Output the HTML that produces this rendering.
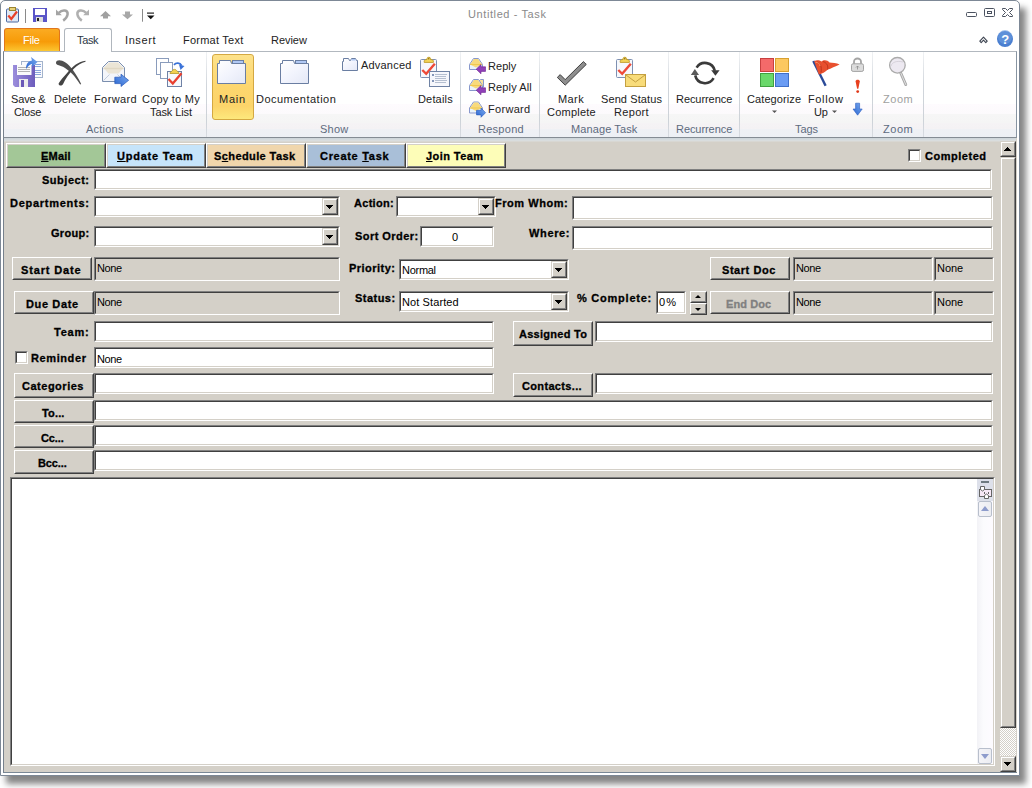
<!DOCTYPE html>
<html><head><meta charset="utf-8">
<style>
*{box-sizing:border-box;margin:0;padding:0}
html,body{width:1032px;height:788px;overflow:hidden;background:#fff;font-family:"Liberation Sans",sans-serif}
.a{position:absolute}
.tx{white-space:pre;line-height:12px}
.in{position:absolute;background:#fff;border-style:solid;border-width:1px;border-color:#808080 #fff #fff #808080}
.in::before{content:"";position:absolute;left:0;top:0;right:0;bottom:0;border-style:solid;border-width:1px;border-color:#404040 #d4d0c8 #d4d0c8 #404040}
.gr{background:#d4d0c8}
.bt{position:absolute;background:#d4d0c8;border-style:solid;border-width:1px;border-color:#fff #404040 #404040 #fff}
.bt::before{content:"";position:absolute;left:0;top:0;right:0;bottom:0;border-style:solid;border-width:1px;border-color:#d4d0c8 #808080 #808080 #d4d0c8}
.dd{position:absolute;top:1px;right:1px;width:16px;bottom:1px;background:#d4d0c8;border-style:solid;border-width:1px;border-color:#d4d0c8 #404040 #404040 #d4d0c8}
.dd::before{content:"";position:absolute;left:0;top:0;right:0;bottom:0;border-style:solid;border-width:1px;border-color:#fff #808080 #808080 #fff}
.sb{position:absolute;background:#d4d0c8;border-style:solid;border-width:1px;border-color:#d4d0c8 #404040 #404040 #d4d0c8}
.sb::before{content:"";position:absolute;left:0;top:0;right:0;bottom:0;border-style:solid;border-width:1px;border-color:#fff #808080 #808080 #fff}
.arr{position:absolute;width:0;height:0;border-left:3.5px solid transparent;border-right:3.5px solid transparent;border-top:4px solid #000}
.sep{position:absolute;top:52px;width:1px;height:85px;background:linear-gradient(#f0f2f4,#d0d5db 40%,#cdd2d8 80%,#d8dce2)}
</style></head>
<body>
<!-- window frame + shadow -->
<div class="a" style="left:6px;top:8px;width:1020px;height:776px;background:rgba(0,0,0,0.48);filter:blur(3px)"></div>
<div class="a" style="left:0;top:0;width:1020px;height:776px;border:1px solid #7d8896;border-radius:5px 5px 0 0;background:#fff"></div>
<!-- form area -->
<div class="a" style="left:3px;top:137px;width:1014px;height:636px;background:#d4d0c8;border-left:1px solid #76808c;border-bottom:1px solid #7a8896"></div>

<!-- QAT icons -->
<svg class="a" style="left:5px;top:7px" width="150" height="18" viewBox="0 0 150 18">
  <!-- task clipboard icon -->
  <rect x="1.5" y="2" width="12" height="13" rx="1" fill="#dfe8f5" stroke="#4a68a0"/>
  <rect x="4.5" y="0.5" width="6" height="3" fill="#e8d27a" stroke="#9a8430"/>
  <path d="M3.3 8.5 L6.3 12 L12 4.5" stroke="#e8402a" stroke-width="2.2" fill="none"/>
  <rect x="20" y="2" width="1" height="14" fill="#8a8a8a"/>
  <!-- save -->
  <rect x="28" y="1" width="14" height="14" fill="#5a55c8"/>
  <rect x="30" y="2" width="10" height="6" fill="#fff"/>
  <rect x="31" y="10" width="7" height="5" fill="#dcdcdc"/><rect x="32" y="11" width="2" height="3" fill="#222"/>
  <!-- undo -->
  <path d="M53.8 5.8 C57.5 2.2,63.2 3,62.6 7.4 C62.2 10,60.5 12,58.2 13.6" stroke="#a4a4a4" stroke-width="2.5" fill="none"/>
  <path d="M51 2.5 L51 8.2 L56.8 8.2 Z" fill="#a4a4a4"/>
  <!-- redo -->
  <path d="M81.2 5.8 C77.5 2.2,71.8 3,72.4 7.4 C72.8 10,74.5 12,76.8 13.6" stroke="#b0b0b0" stroke-width="2.5" fill="none"/>
  <path d="M84 2.5 L84 8.2 L78.2 8.2 Z" fill="#b0b0b0"/>
  <!-- up/down arrows -->
  <path d="M95 9.2 L100.5 4 L106 9.2 L103 9.2 L103 11.6 L98 11.6 L98 9.2 Z" fill="#a0a0a0"/>
  <path d="M117 7.4 L122.5 12.2 L128 7.4 L125 7.4 L125 4.6 L120 4.6 L120 7.4 Z" fill="#a8a8a8"/>
  <rect x="137" y="2" width="1" height="12.7" fill="#8a8a8a"/>
  <rect x="142" y="5.5" width="7" height="1.2" fill="#222"/>
  <path d="M142 8.6 L149.5 8.6 L145.75 12.2 Z" fill="#111"/>
</svg>
<!-- window controls -->
<svg class="a" style="left:960px;top:4px" width="58" height="48" viewBox="0 0 58 48">
  <rect x="6.5" y="8.5" width="10" height="4" rx="1" fill="#fff" stroke="#4b5260"/>
  <rect x="24.5" y="4.5" width="10" height="8" rx="1" fill="#fff" stroke="#4b5260"/>
  <rect x="27.5" y="7.5" width="4" height="2" fill="#fff" stroke="#4b5260"/>
  <path d="M42.5 4.5 L45.5 4.5 L47.5 6.5 L49.5 4.5 L52.5 4.5 L52.5 5.5 L49.5 8.5 L52.5 11.5 L52.5 12.5 L49.5 12.5 L47.5 10.5 L45.5 12.5 L42.5 12.5 L42.5 11.5 L45.5 8.5 L42.5 5.5 Z" fill="#fff" stroke="#4b5260"/>
  <path d="M19.8 37.2 L23.5 33.2 L27.2 37.2 L25.8 38.6 L23.5 36.2 L21.2 38.6 Z" fill="#fff" stroke="#3c4350" stroke-width="1.1" stroke-linejoin="round"/>
  <circle cx="45" cy="35" r="8" fill="#4a7fd0"/>
  <circle cx="45" cy="33" r="7" fill="#6a9be0" opacity="0.6"/>
  <text x="45.3" y="40" font-family="Liberation Sans" font-weight="bold" font-size="13" fill="#fff" text-anchor="middle">?</text>
</svg>

<!-- tabs -->
<div class="a" style="left:4px;top:28px;width:56px;height:24px;border:1px solid #e0761c;border-bottom:none;border-radius:3px 3px 0 0;background:linear-gradient(#fbab22,#f79b08 55%,#fbbf2a 90%,#fcd23a)"></div>
<div class="a" style="left:64px;top:28px;width:48px;height:24px;border:1px solid #b0b6bd;border-bottom:none;border-radius:3px 3px 0 0;background:#fff"></div>

<!-- ribbon -->
<div class="a" style="left:3px;top:51px;width:1014px;height:87px;border:1px solid;border-color:#b2b8bf #8794a2 #848c94 #76808c;background:linear-gradient(#fff 0px,#fff 52px,#fefbfe 52px,#fcfafc 62px,#f6f6f6 62px,#f5f5f5 71px,#f5f3f5 71px,#f4f2f4 77px,#eff1f5 77px,#edf0f5 85px)"></div>
<div class="a" style="left:65px;top:51px;width:46px;height:1px;background:#fff"></div>
<div class="a" style="left:4px;top:138px;width:1012px;height:4px;background:linear-gradient(#ccd4d9 0px,#d6dcdf 2px,#dcdedd 3px,#d4d0c8 4px)"></div>

<div class="sep" style="left:206px"></div>
<div class="sep" style="left:460px"></div>
<div class="sep" style="left:539px"></div>
<div class="sep" style="left:668px"></div>
<div class="sep" style="left:739px"></div>
<div class="sep" style="left:872px"></div>
<div class="sep" style="left:923px"></div>

<!-- Main selected button -->
<div class="a" style="left:212px;top:54px;width:42px;height:66px;border:1px solid #d4a842;border-radius:3px;background:linear-gradient(#fde28a,#fdd66e 50%,#fcd46a 80%,#fde87c)"></div>

<!-- ribbon icons -->
<svg class="a" style="left:0;top:52px" width="1000" height="70" viewBox="0 52 1000 70">
  <!-- save & close -->
  <defs>
   <linearGradient id="flop" x1="0" x2="1"><stop offset="0" stop-color="#9c8edc"/><stop offset="1" stop-color="#6c5cbc"/></linearGradient>
   <linearGradient id="blu" x1="0" x2="1" y1="1" y2="0"><stop offset="0" stop-color="#2a66d0"/><stop offset="1" stop-color="#7aaaf0"/></linearGradient>
  </defs>
  <rect x="21.5" y="61.5" width="21" height="16" fill="#f9fafd" stroke="#a4b4cc"/>
  <path d="M35 64.5 H41 M35 66.5 H41 M35 70.5 H41 M35 72.5 H41 M35 74.5 H41" stroke="#8aa6dc"/>
  <path d="M13 65 H35 V87 H15 L13 85 Z" fill="url(#flop)"/>
  <rect x="17" y="65" width="14.5" height="10" fill="#fbfbfb"/>
  <path d="M18 67.5 H30 M18 69.5 H30 M18 71.5 H30" stroke="#b4b4b4"/>
  <rect x="19" y="79" width="9" height="8" fill="#ececec"/><rect x="21" y="80" width="3" height="7" fill="#6a58b8"/>
  <path d="M26 69 C26 63,29 61,32 60.5 L31 57 L37.5 62 L32 67 L32 64 C30 64.5,28 66,26 69 Z" fill="url(#blu)"/>
  <!-- delete X -->
  <path d="M56 62.5 C56.5 59.5,61 59.5,65.5 62.5 C70 65.5,76 73,81.2 84 L80.2 84.6 C75 76,69.5 70.5,63 66.8 C59 65,55.6 65,56 62.5 Z" fill="#505050"/>
  <path d="M85.5 60.8 C78.5 61.5,72.5 66.5,67.5 72.5 C63.5 77,60.2 80.5,58.6 83.5 C58.6 86,61.8 86.2,63 84.2 C65 79.5,69 73.5,73.8 68.8 C77.5 65.2,81.5 62.8,85.5 61.8 Z" fill="#444"/>
  <!-- forward envelope -->
  <path d="M102.5 67.5 L108.5 61.5 H118.5 L124.5 67.5 V81.5 H102.5 Z" fill="#f3f5fa" stroke="#7a8eae"/>
  <path d="M103.5 68 L109 62.5 H118 L123.5 68 L118.5 73.5 H108.5 Z" fill="#ebe5d6"/>
  <path d="M103.5 68.5 H123.5" stroke="#e0d8c4" stroke-width="1.5"/>
  <path d="M103.5 80.5 L109.5 74.5 M123.5 80.5 L117.5 74.5" stroke="#b4c0d4" stroke-width="0.8"/>
  <path d="M114.8 77.2 H121 V74.2 L128.6 80.3 L121 86.5 V83.6 H114.8 Z" fill="url(#blu)" stroke="#2456b8" stroke-width="0.7"/>
  <!-- copy to my task list -->
  <rect x="156.5" y="58.5" width="12" height="16" fill="#fff" stroke="#8a9cbc"/>
  <rect x="160.5" y="62.5" width="12" height="16" fill="#fff" stroke="#8a9cbc"/>
  <rect x="167.5" y="71.5" width="14" height="15" fill="#f6f8fc" stroke="#6f82a6"/>
  <path d="M170 73.5 C170 71.5,172 71.5,172.5 70.5 C173 69,176 69,176.5 70.5 C177 71.5,179 71.5,179 73.5 Z" fill="#f0d050" stroke="#b89828" stroke-width="0.8"/>
  <path d="M168.5 79 L172.8 83.6 L181.5 73.2" stroke="#e84030" stroke-width="2.3" fill="none"/>
  <path d="M174 64.8 C176 62.5,180 62.5,181.5 65.5" stroke="#3a72d8" stroke-width="1.8" fill="none"/>
  <path d="M179 64.5 L184.5 66 L180.5 70 Z" fill="#3a72d8"/>
  <!-- main folder -->
  <defs><linearGradient id="fold" x1="0" y1="0" x2="1" y2="1"><stop offset="0" stop-color="#ffffff"/><stop offset="0.5" stop-color="#f2f4fd"/><stop offset="1" stop-color="#e4e8f6"/></linearGradient></defs>
  <g transform="translate(-63,0)">
  <path d="M280.5 63.5 H282.5 V60.5 H293.5 L294.5 63.5 H308.5 V83.5 H280.5 Z" fill="url(#fold)" stroke="#6a7ea2"/>
  <rect x="295.5" y="60.5" width="11" height="3" fill="#b0c8f4" stroke="#6a7ea2"/>
  </g>
  <!-- documentation folder -->
  <g transform="translate(0,0)">
  <path d="M280.5 63.5 H282.5 V60.5 H293.5 L294.5 63.5 H308.5 V83.5 H280.5 Z" fill="url(#fold)" stroke="#6a7ea2"/>
  <rect x="295.5" y="60.5" width="11" height="3" fill="#b0c8f4" stroke="#6a7ea2"/>
  </g>
  <!-- advanced small folder -->
  <path d="M342.5 61.5 H343.5 V58.5 H348.5 L349.5 60.5 H350.5 L351.5 58.5 H355.5 L356.5 60.5 H357.5 V70.5 H342.5 Z" fill="url(#fold)" stroke="#6a7ea2"/>
  <rect x="351.5" y="59" width="4" height="1.5" fill="#b0c8f4"/>
  <!-- details -->
  <g transform="translate(0,0)">
  <rect x="420.5" y="59.5" width="16" height="18" rx="1" fill="#f6f8fc" stroke="#7d90b2"/>
  <path d="M424.2 62.4 V61.2 C424.2 60.2,425.2 59.6,426.6 59.6 H427 V58.6 C427 56.8,430.6 56.8,430.6 58.6 V59.6 H431 C432.4 59.6,433.4 60.2,433.4 61.2 V62.4 Z" fill="#f4d65a" stroke="#b8921c" stroke-width="0.8"/><circle cx="428.8" cy="58.8" r="0.7" fill="#7a5a10"/>
  <path d="M422.3 70 L426.2 73.8 L434.8 63.8" stroke="#ee4a38" stroke-width="2.4" fill="none"/>
  </g>
  <rect x="429.5" y="71.5" width="20" height="15" fill="#f6f7fc" stroke="#6f82a4"/>
  <path d="M435 74.5 H447 M435 76.5 H446 M435 78.5 H446 M435 80.5 H447 M435 82.5 H446" stroke="#a4b0c4" stroke-width="0.8"/>
  <rect x="432" y="74" width="2" height="2" fill="#8496b8"/><rect x="432" y="80" width="2" height="2" fill="#8496b8"/>
  <!-- reply icons -->
  <g transform="translate(0,0)">
  <path d="M469.5 64.5 L473.5 58.5 H478.5 L482.5 64.5 V69.5 H469.5 Z" fill="#eaf4fc" stroke="#8898cc"/>
  <path d="M470 64.5 L474 59 H478 L482 64.5 L476 67.5 Z" fill="#f8da7c"/>
  <path d="M470 64.5 H482" stroke="#f0c850" stroke-width="1"/>
  </g><path d="M485.5 66.8 H481 V64.5 L476.2 69.2 L481 73.8 V71.4 H485.5 Z" fill="#9040b8" stroke="#6a2090" stroke-width="0.6"/>
  <g transform="translate(0,21)"><path d="M476.5 62.5 L480.5 58.5 H483.5 V66 H477 Z" fill="#f8e09a" stroke="#8898cc"/>
  <path d="M469.5 64.5 L473.5 58.5 H478.5 L482.5 64.5 V69.5 H469.5 Z" fill="#eaf4fc" stroke="#8898cc"/>
  <path d="M470 64.5 L474 59 H478 L482 64.5 L476 67.5 Z" fill="#f8da7c"/>
  <path d="M470 64.5 H482" stroke="#f0c850" stroke-width="1"/>
  </g><path d="M485.5 87.8 H481 V85.5 L476.2 90.2 L481 94.8 V92.4 H485.5 Z" fill="#9040b8" stroke="#6a2090" stroke-width="0.6"/>
  <g transform="translate(0,43.5)">
  <path d="M469.5 64.5 L473.5 58.5 H478.5 L482.5 64.5 V69.5 H469.5 Z" fill="#eaf4fc" stroke="#8898cc"/>
  <path d="M470 64.5 L474 59 H478 L482 64.5 L476 67.5 Z" fill="#f8da7c"/>
  <path d="M470 64.5 H482" stroke="#f0c850" stroke-width="1"/>
  </g><path d="M476.5 110.3 H481 V108.0 L485.6 112.7 L481 117.3 V114.9 H476.5 Z" fill="url(#blu)" stroke="#2456b8" stroke-width="0.6"/>
  <!-- mark complete -->
  <path d="M557.3 77.4 L560.2 74.6 L565.2 79.6 L583.4 61.6 L586.3 64.4 L565.2 85.2 Z" fill="#8e8e8e" stroke="#353535" stroke-width="0.9" stroke-linejoin="miter"/>
  <!-- send status report -->
  <g transform="translate(196,0)">
  <rect x="420.5" y="59.5" width="16" height="18" rx="1" fill="#f6f8fc" stroke="#7d90b2"/>
  <path d="M424.2 62.4 V61.2 C424.2 60.2,425.2 59.6,426.6 59.6 H427 V58.6 C427 56.8,430.6 56.8,430.6 58.6 V59.6 H431 C432.4 59.6,433.4 60.2,433.4 61.2 V62.4 Z" fill="#f4d65a" stroke="#b8921c" stroke-width="0.8"/><circle cx="428.8" cy="58.8" r="0.7" fill="#7a5a10"/>
  <path d="M422.3 70 L426.2 73.8 L434.8 63.8" stroke="#ee4a38" stroke-width="2.4" fill="none"/>
  </g>
  <rect x="625.5" y="74.5" width="20" height="12" fill="#f8dc7a" stroke="#c4a040"/>
  <path d="M626 75 L635.5 82 L645 75" fill="none" stroke="#c4a040"/>
  <!-- recurrence -->
  <path d="M696.6 67.6 A10 10 0 0 1 714.8 70.8" stroke="#3a3a3a" stroke-width="2.6" fill="none"/>
  <path d="M711.2 70.2 L719.6 70.2 L715.4 75.8 Z" fill="#3a3a3a"/>
  <path d="M713.6 78.2 A10 10 0 0 1 695.2 75.4" stroke="#3a3a3a" stroke-width="2.6" fill="none"/>
  <path d="M690.8 75 L699 75 L694.9 69 Z" fill="#5a5a5a"/>
  <!-- categorize -->
  <rect x="760.5" y="58.5" width="13" height="13" fill="#f46a6a" stroke="#c84040"/>
  <rect x="775.5" y="58.5" width="13" height="13" fill="#fcc860" stroke="#d8a030"/>
  <rect x="760.5" y="73.5" width="13" height="13" fill="#6ad86a" stroke="#40a040"/>
  <rect x="775.5" y="73.5" width="13" height="13" fill="#6a9cf4" stroke="#4070c8"/>
  <!-- follow up flag -->
  <path d="M813.3 61 L825.6 85.8" stroke="#2a4a98" stroke-width="2.4"/>
  <path d="M814.2 61.2 C816.5 59.8,819.5 60.2,821.5 61.6 C823.5 59.6,827.5 59.8,829.5 62.6 C832.5 62.6,836.5 63.4,839.6 64.4 C835.5 66.2,831 68.2,827.5 69.8 C825.5 72,822 73.8,818.8 74.4 Z" fill="#e8502e"/>
  <path d="M817 62 C820.5 63,822 67,821 72.5 M823 61.5 C827 63,828.5 66,827.5 69.5" stroke="#b8321a" stroke-width="0.9" fill="none"/>
  <path d="M815.5 62.5 C818 62,820 63.5,820 66" stroke="#ff9a70" stroke-width="0.8" fill="none"/>
  <!-- lock -->
  <path d="M854 64 V61.8 A3.5 3.3 0 0 1 861 61.8 V64" stroke="#a4a4a4" stroke-width="1.8" fill="none"/>
  <rect x="851.5" y="63.8" width="12" height="7.6" rx="1.6" fill="#dcdcdc" stroke="#a4a4a4"/>
  <path d="M857.5 66 V69.5 M856 67.5 L857.5 66 L859 67.5" stroke="#8a8a8a" stroke-width="0.8" fill="none"/>
  <!-- exclamation -->
  <path d="M855.6 81.4 C855.4 79.2,859.8 79.2,859.8 81.4 L858.3 88.8 H857.1 Z" fill="#e8401e"/>
  <circle cx="857.7" cy="91.6" r="1.4" fill="#e03818"/>
  <!-- low importance arrow -->
  <path d="M855.6 103.2 H859.6 V109 H862.2 L857.6 115.2 L853 109 H855.6 Z" fill="url(#blu)" stroke="#2a5cc0" stroke-width="0.6"/>
  <!-- zoom -->
  <path d="M900.6 72.6 L905.8 84.6" stroke="#a8a8a8" stroke-width="2.8" stroke-linecap="round"/>
  <path d="M900.6 72.6 L905.8 84.6" stroke="#e0e0e0" stroke-width="1" stroke-linecap="round"/>
  <circle cx="897.4" cy="65.3" r="7.8" fill="#ede9f1" stroke="#ababab" stroke-width="1.3"/>
  <path d="M891 66 C892 62,897 60.5,903 62" stroke="#d0ccd4" stroke-width="0.8" fill="none"/>
  <!-- dropdown arrows -->
  <path d="M772 110.5 H777 L774.5 113 Z" fill="#555"/>
  <path d="M832 110.5 H837 L834.5 113 Z" fill="#555"/>
</svg>

<!-- ================= FORM ================ -->
<!-- tab buttons -->
<div class="bt" style="left:6px;top:143px;width:100px;height:25px;background:#a3c797"></div>
<div class="bt" style="left:106px;top:143px;width:100px;height:25px;background:#c6e4fa"></div>
<div class="bt" style="left:206px;top:143px;width:100px;height:25px;background:#f0d6ac"></div>
<div class="bt" style="left:306px;top:143px;width:100px;height:25px;background:#a9bfd8"></div>
<div class="bt" style="left:406px;top:143px;width:100px;height:25px;background:#fdfdb8"></div>

<!-- checkbox completed -->
<div class="in" style="left:908px;top:149px;width:13px;height:13px"></div>

<!-- row inputs -->
<div class="in" style="left:94px;top:169px;width:898px;height:21px"></div>
<div class="in" style="left:94px;top:196px;width:246px;height:21px"><div class="dd"><svg class="a" style="left:3px;top:6px" width="7" height="4"><path d="M0 0H7V1H6V2H5V3H4V4H3V3H2V2H1V1H0Z" fill="#000"/></svg></div></div>
<div class="in" style="left:396px;top:196px;width:100px;height:21px"><div class="dd"><svg class="a" style="left:3px;top:6px" width="7" height="4"><path d="M0 0H7V1H6V2H5V3H4V4H3V3H2V2H1V1H0Z" fill="#000"/></svg></div></div>
<div class="in" style="left:572px;top:196px;width:421px;height:24px"></div>
<div class="in" style="left:94px;top:226px;width:246px;height:21px"><div class="dd"><svg class="a" style="left:3px;top:6px" width="7" height="4"><path d="M0 0H7V1H6V2H5V3H4V4H3V3H2V2H1V1H0Z" fill="#000"/></svg></div></div>
<div class="in" style="left:420px;top:226px;width:74px;height:21px"></div>
<div class="in" style="left:572px;top:226px;width:421px;height:24px"></div>

<div class="bt" style="left:12px;top:257px;width:80px;height:23px"></div>
<div class="in gr" style="left:94px;top:257px;width:246px;height:24px"></div>
<div class="in" style="left:399px;top:259px;width:170px;height:21px"><div class="dd"><svg class="a" style="left:3px;top:6px" width="7" height="4"><path d="M0 0H7V1H6V2H5V3H4V4H3V3H2V2H1V1H0Z" fill="#000"/></svg></div></div>
<div class="bt" style="left:710px;top:257px;width:80px;height:23px"></div>
<div class="in gr" style="left:793px;top:257px;width:140px;height:24px"></div>
<div class="in gr" style="left:934px;top:257px;width:60px;height:24px"></div>

<div class="bt" style="left:14px;top:291px;width:80px;height:23px"></div>
<div class="in gr" style="left:94px;top:291px;width:246px;height:24px"></div>
<div class="in" style="left:399px;top:291px;width:170px;height:21px"><div class="dd"><svg class="a" style="left:3px;top:6px" width="7" height="4"><path d="M0 0H7V1H6V2H5V3H4V4H3V3H2V2H1V1H0Z" fill="#000"/></svg></div></div>
<div class="in" style="left:656px;top:291px;width:30px;height:23px"></div>
<div class="bt" style="left:690px;top:291px;width:17px;height:12px"><div class="arr" style="left:4px;top:3px;border-top:none;border-bottom:3px solid #000;border-left-width:3px;border-right-width:3px"></div></div>
<div class="bt" style="left:690px;top:303px;width:17px;height:12px"><div class="arr" style="left:4px;top:4px;border-top-width:3px;border-left-width:3px;border-right-width:3px"></div></div>
<div class="bt" style="left:710px;top:291px;width:80px;height:23px"></div>
<div class="in gr" style="left:793px;top:291px;width:140px;height:24px"></div>
<div class="in gr" style="left:934px;top:291px;width:60px;height:24px"></div>

<div class="in" style="left:94px;top:321px;width:400px;height:21px"></div>
<div class="bt" style="left:513px;top:321px;width:80px;height:25px"></div>
<div class="in" style="left:595px;top:321px;width:398px;height:21px"></div>

<div class="in" style="left:15px;top:351px;width:13px;height:13px"></div>
<div class="in" style="left:94px;top:347px;width:400px;height:21px"></div>

<div class="bt" style="left:14px;top:373px;width:80px;height:25px"></div>
<div class="in" style="left:94px;top:373px;width:400px;height:21px"></div>
<div class="bt" style="left:513px;top:373px;width:80px;height:24px"></div>
<div class="in" style="left:595px;top:373px;width:398px;height:21px"></div>

<div class="bt" style="left:14px;top:400px;width:80px;height:23px"></div>
<div class="in" style="left:94px;top:400px;width:899px;height:21px"></div>
<div class="bt" style="left:14px;top:425px;width:80px;height:23px"></div>
<div class="in" style="left:94px;top:425px;width:899px;height:21px"></div>
<div class="bt" style="left:14px;top:450px;width:80px;height:24px"></div>
<div class="in" style="left:94px;top:450px;width:899px;height:21px"></div>

<!-- body -->
<div class="in" style="left:10px;top:477px;width:985px;height:289px"></div>
<div class="a" style="left:977px;top:479px;width:16px;height:285px;background:linear-gradient(90deg,#f2f2f6,#fbfbfd 40%,#fdfbff)"></div>
<div class="a" style="left:977px;top:479px;width:16px;height:22px;background:#dde0ea"></div>
<div class="a" style="left:981px;top:481px;width:8px;height:2px;background:#6e7a80"></div>
<svg class="a" style="left:979px;top:486px" width="13" height="13" viewBox="0 0 13 13">
  <rect x="0.5" y="3.5" width="12" height="7" fill="#f6e8f6" stroke="#666"/>
  <path d="M1.5 0.5 H5.5 V3.5 L3.5 5 L1.5 3.5 Z" fill="#fff" stroke="#666"/>
  <path d="M5.5 12.5 H9.5 V9.5 L7.5 8 L5.5 9.5 Z" fill="#fff" stroke="#666"/>
  <rect x="5" y="6" width="1" height="2" fill="#666"/><rect x="9" y="6" width="1" height="2" fill="#666"/>
</svg>
<div class="a" style="left:978px;top:501px;width:14px;height:16px;border:1px solid #b8bfcc;border-radius:2px;background:linear-gradient(90deg,#f4f4f8,#ecedf2)"></div>
<div class="a" style="left:981px;top:506px;width:0;height:0;border-left:4.5px solid transparent;border-right:4.5px solid transparent;border-bottom:5px solid #8e9ccc"></div>
<div class="a" style="left:978px;top:748px;width:14px;height:16px;border:1px solid #b8bfcc;border-radius:2px;background:linear-gradient(90deg,#f4f4f8,#ecedf2)"></div>
<div class="a" style="left:981px;top:754px;width:0;height:0;border-left:4.5px solid transparent;border-right:4.5px solid transparent;border-top:5px solid #8e9ccc"></div>

<!-- window scrollbar -->
<div class="a" style="left:1000px;top:141px;width:16px;height:631px;background:repeating-conic-gradient(#d4d0c8 0 25%,#fff 0 50%) 0 0/2px 2px"></div>
<div class="sb" style="left:1000px;top:141px;width:16px;height:16px"><svg class="a" style="left:3px;top:5px" width="7" height="4"><path d="M3 0H4V1H5V2H6V3H7V4H0V3H1V2H2V1H3Z" fill="#000"/></svg></div>
<div class="sb" style="left:1000px;top:157px;width:16px;height:571px"></div>
<div class="sb" style="left:1000px;top:756px;width:16px;height:16px"><svg class="a" style="left:3px;top:5px" width="7" height="4"><path d="M0 0H7V1H6V2H5V3H4V4H3V3H2V2H1V1H0Z" fill="#000"/></svg></div>

<div class="a tx" style="left:468.0px;top:8px;font:11px 'Liberation Sans',sans-serif;color:#8a8a8a;letter-spacing:0.599px;">Untitled - Task</div>
<div class="a tx" style="left:23.0px;top:34px;font:11px 'Liberation Sans',sans-serif;color:#fff;letter-spacing:-0.266px;">File</div>
<div class="a tx" style="left:77.0px;top:34px;font:11px 'Liberation Sans',sans-serif;color:#2d3846;letter-spacing:-0.333px;">Task</div>
<div class="a tx" style="left:125.0px;top:34px;font:11px 'Liberation Sans',sans-serif;color:#222;letter-spacing:0.600px;">Insert</div>
<div class="a tx" style="left:183.0px;top:34px;font:11px 'Liberation Sans',sans-serif;color:#222;letter-spacing:0.240px;">Format Text</div>
<div class="a tx" style="left:271.0px;top:34px;font:11px 'Liberation Sans',sans-serif;color:#222;letter-spacing:-0.040px;">Review</div>
<div class="a tx" style="left:11.0px;top:93px;font:11px 'Liberation Sans',sans-serif;color:#222;letter-spacing:-0.160px;">Save &amp;</div>
<div class="a tx" style="left:14.0px;top:106px;font:11px 'Liberation Sans',sans-serif;color:#222;letter-spacing:-0.200px;">Close</div>
<div class="a tx" style="left:54.0px;top:93px;font:11px 'Liberation Sans',sans-serif;color:#222;letter-spacing:0.040px;">Delete</div>
<div class="a tx" style="left:94.0px;top:93px;font:11px 'Liberation Sans',sans-serif;color:#222;letter-spacing:0.400px;">Forward</div>
<div class="a tx" style="left:142.0px;top:93px;font:11px 'Liberation Sans',sans-serif;color:#222;letter-spacing:0.222px;">Copy to My</div>
<div class="a tx" style="left:150.0px;top:106px;font:11px 'Liberation Sans',sans-serif;color:#222;letter-spacing:-0.100px;">Task List</div>
<div class="a tx" style="left:219.0px;top:93px;font:11px 'Liberation Sans',sans-serif;color:#222;letter-spacing:0.733px;">Main</div>
<div class="a tx" style="left:256.0px;top:93px;font:11px 'Liberation Sans',sans-serif;color:#222;letter-spacing:0.483px;">Documentation</div>
<div class="a tx" style="left:361.0px;top:59px;font:11px 'Liberation Sans',sans-serif;color:#222;letter-spacing:0.199px;">Advanced</div>
<div class="a tx" style="left:418.0px;top:93px;font:11px 'Liberation Sans',sans-serif;color:#222;letter-spacing:0.167px;">Details</div>
<div class="a tx" style="left:488.0px;top:60px;font:11px 'Liberation Sans',sans-serif;color:#222;letter-spacing:0.050px;">Reply</div>
<div class="a tx" style="left:488.0px;top:81px;font:11px 'Liberation Sans',sans-serif;color:#222;letter-spacing:0.127px;">Reply All</div>
<div class="a tx" style="left:488.0px;top:103px;font:11px 'Liberation Sans',sans-serif;color:#222;letter-spacing:0.300px;">Forward</div>
<div class="a tx" style="left:558.0px;top:93px;font:11px 'Liberation Sans',sans-serif;color:#222;letter-spacing:0.400px;">Mark</div>
<div class="a tx" style="left:547.0px;top:106px;font:11px 'Liberation Sans',sans-serif;color:#222;letter-spacing:0.228px;">Complete</div>
<div class="a tx" style="left:601.0px;top:93px;font:11px 'Liberation Sans',sans-serif;color:#222;letter-spacing:0.100px;">Send Status</div>
<div class="a tx" style="left:614.0px;top:106px;font:11px 'Liberation Sans',sans-serif;color:#222;letter-spacing:0.320px;">Report</div>
<div class="a tx" style="left:676.0px;top:93px;font:11px 'Liberation Sans',sans-serif;color:#222;letter-spacing:-0.065px;">Recurrence</div>
<div class="a tx" style="left:747.0px;top:93px;font:11px 'Liberation Sans',sans-serif;color:#222;letter-spacing:0.090px;">Categorize</div>
<div class="a tx" style="left:808.0px;top:93px;font:11px 'Liberation Sans',sans-serif;color:#222;letter-spacing:0.640px;">Follow</div>
<div class="a tx" style="left:814.0px;top:106px;font:11px 'Liberation Sans',sans-serif;color:#222;letter-spacing:-0.200px;">Up</div>
<div class="a tx" style="left:883.0px;top:93px;font:11px 'Liberation Sans',sans-serif;color:#a0a0a0;letter-spacing:0.532px;">Zoom</div>
<div class="a tx" style="left:86.0px;top:123px;font:11px 'Liberation Sans',sans-serif;color:#5e6b7e;letter-spacing:0.234px;">Actions</div>
<div class="a tx" style="left:320.0px;top:123px;font:11px 'Liberation Sans',sans-serif;color:#5e6b7e;letter-spacing:0.267px;">Show</div>
<div class="a tx" style="left:478.0px;top:123px;font:11px 'Liberation Sans',sans-serif;color:#5e6b7e;letter-spacing:0.267px;">Respond</div>
<div class="a tx" style="left:571.0px;top:123px;font:11px 'Liberation Sans',sans-serif;color:#5e6b7e;letter-spacing:0.100px;">Manage Task</div>
<div class="a tx" style="left:676.0px;top:123px;font:11px 'Liberation Sans',sans-serif;color:#5e6b7e;letter-spacing:-0.065px;">Recurrence</div>
<div class="a tx" style="left:795.0px;top:123px;font:11px 'Liberation Sans',sans-serif;color:#5e6b7e;letter-spacing:-0.067px;">Tags</div>
<div class="a tx" style="left:883.0px;top:123px;font:11px 'Liberation Sans',sans-serif;color:#5e6b7e;letter-spacing:0.532px;">Zoom</div>
<div class="a tx" style="left:41.0px;top:150px;font:bold 11px 'Liberation Sans',sans-serif;color:#000;letter-spacing:0.200px;-webkit-text-stroke:0.3px #000;"><u>E</u>Mail</div>
<div class="a tx" style="left:117.0px;top:150px;font:bold 11px 'Liberation Sans',sans-serif;color:#000;letter-spacing:0.760px;-webkit-text-stroke:0.3px #000;"><u>U</u>pdate Team</div>
<div class="a tx" style="left:214.0px;top:150px;font:bold 11px 'Liberation Sans',sans-serif;color:#000;letter-spacing:0.401px;-webkit-text-stroke:0.3px #000;">S<u>c</u>hedule Task</div>
<div class="a tx" style="left:320.0px;top:150px;font:bold 11px 'Liberation Sans',sans-serif;color:#000;letter-spacing:0.700px;-webkit-text-stroke:0.3px #000;">Create <u>T</u>ask</div>
<div class="a tx" style="left:426.0px;top:150px;font:bold 11px 'Liberation Sans',sans-serif;color:#000;letter-spacing:0.427px;-webkit-text-stroke:0.3px #000;"><u>J</u>oin Team</div>
<div class="a tx" style="left:925.0px;top:150px;font:bold 11px 'Liberation Sans',sans-serif;color:#000;letter-spacing:0.523px;-webkit-text-stroke:0.3px #000;">Completed</div>
<div class="a tx" style="left:42.0px;top:174px;font:bold 11px 'Liberation Sans',sans-serif;color:#000;letter-spacing:0.514px;-webkit-text-stroke:0.3px #000;">Subject:</div>
<div class="a tx" style="left:10.0px;top:197px;font:bold 11px 'Liberation Sans',sans-serif;color:#000;letter-spacing:0.728px;-webkit-text-stroke:0.3px #000;">Departments:</div>
<div class="a tx" style="left:51.0px;top:227px;font:bold 11px 'Liberation Sans',sans-serif;color:#000;letter-spacing:0.280px;-webkit-text-stroke:0.3px #000;">Group:</div>
<div class="a tx" style="left:354.0px;top:197px;font:bold 11px 'Liberation Sans',sans-serif;color:#000;letter-spacing:0.300px;-webkit-text-stroke:0.3px #000;">Action:</div>
<div class="a tx" style="left:355.0px;top:230px;font:bold 11px 'Liberation Sans',sans-serif;color:#000;letter-spacing:0.440px;-webkit-text-stroke:0.3px #000;">Sort Order:</div>
<div class="a tx" style="left:452.0px;top:231px;font:11px 'Liberation Sans',sans-serif;color:#000;letter-spacing:0.000px;">0</div>
<div class="a tx" style="left:495.0px;top:197px;font:bold 11px 'Liberation Sans',sans-serif;color:#000;letter-spacing:0.534px;-webkit-text-stroke:0.3px #000;">From Whom:</div>
<div class="a tx" style="left:529.0px;top:227px;font:bold 11px 'Liberation Sans',sans-serif;color:#000;letter-spacing:0.640px;-webkit-text-stroke:0.3px #000;">Where:</div>
<div class="a tx" style="left:21.0px;top:264px;font:bold 11px 'Liberation Sans',sans-serif;color:#000;letter-spacing:0.844px;-webkit-text-stroke:0.3px #000;">Start Date</div>
<div class="a tx" style="left:97.0px;top:262px;font:11px 'Liberation Sans',sans-serif;color:#000;letter-spacing:-0.400px;">None</div>
<div class="a tx" style="left:349.0px;top:262px;font:bold 11px 'Liberation Sans',sans-serif;color:#000;letter-spacing:0.473px;-webkit-text-stroke:0.3px #000;">Priority:</div>
<div class="a tx" style="left:402.0px;top:264px;font:11px 'Liberation Sans',sans-serif;color:#000;letter-spacing:-0.280px;">Normal</div>
<div class="a tx" style="left:722.0px;top:264px;font:bold 11px 'Liberation Sans',sans-serif;color:#000;letter-spacing:0.550px;-webkit-text-stroke:0.3px #000;">Start Doc</div>
<div class="a tx" style="left:796.0px;top:262px;font:11px 'Liberation Sans',sans-serif;color:#000;letter-spacing:-0.400px;">None</div>
<div class="a tx" style="left:937.0px;top:262px;font:11px 'Liberation Sans',sans-serif;color:#000;letter-spacing:-0.067px;">None</div>
<div class="a tx" style="left:26.0px;top:298px;font:bold 11px 'Liberation Sans',sans-serif;color:#000;letter-spacing:0.629px;-webkit-text-stroke:0.3px #000;">Due Date</div>
<div class="a tx" style="left:97.0px;top:296px;font:11px 'Liberation Sans',sans-serif;color:#000;letter-spacing:-0.400px;">None</div>
<div class="a tx" style="left:355.0px;top:292px;font:bold 11px 'Liberation Sans',sans-serif;color:#000;letter-spacing:0.466px;-webkit-text-stroke:0.3px #000;">Status:</div>
<div class="a tx" style="left:402.0px;top:296px;font:11px 'Liberation Sans',sans-serif;color:#000;letter-spacing:0.100px;">Not Started</div>
<div class="a tx" style="left:577.0px;top:292px;font:bold 11px 'Liberation Sans',sans-serif;color:#000;letter-spacing:0.760px;-webkit-text-stroke:0.3px #000;">% Complete:</div>
<div class="a tx" style="left:659.0px;top:296px;font:11px 'Liberation Sans',sans-serif;color:#000;letter-spacing:1.200px;">0%</div>
<div class="a tx" style="left:726.0px;top:298px;font:bold 11px 'Liberation Sans',sans-serif;color:#808080;letter-spacing:0.100px;-webkit-text-stroke:0.3px #808080;">End Doc</div>
<div class="a tx" style="left:796.0px;top:296px;font:11px 'Liberation Sans',sans-serif;color:#000;letter-spacing:-0.400px;">None</div>
<div class="a tx" style="left:937.0px;top:296px;font:11px 'Liberation Sans',sans-serif;color:#000;letter-spacing:-0.067px;">None</div>
<div class="a tx" style="left:54.0px;top:326px;font:bold 11px 'Liberation Sans',sans-serif;color:#000;letter-spacing:0.750px;-webkit-text-stroke:0.3px #000;">Team:</div>
<div class="a tx" style="left:519.0px;top:328px;font:bold 11px 'Liberation Sans',sans-serif;color:#000;letter-spacing:0.280px;-webkit-text-stroke:0.3px #000;">Assigned To</div>
<div class="a tx" style="left:31.0px;top:352px;font:bold 11px 'Liberation Sans',sans-serif;color:#000;letter-spacing:0.600px;-webkit-text-stroke:0.3px #000;">Reminder</div>
<div class="a tx" style="left:97.0px;top:353px;font:11px 'Liberation Sans',sans-serif;color:#000;letter-spacing:-0.400px;">None</div>
<div class="a tx" style="left:22.0px;top:380px;font:bold 11px 'Liberation Sans',sans-serif;color:#000;letter-spacing:0.510px;-webkit-text-stroke:0.3px #000;">Categories</div>
<div class="a tx" style="left:522.0px;top:380px;font:bold 11px 'Liberation Sans',sans-serif;color:#000;letter-spacing:0.340px;-webkit-text-stroke:0.3px #000;">Contacts...</div>
<div class="a tx" style="left:42.0px;top:407px;font:bold 11px 'Liberation Sans',sans-serif;color:#000;letter-spacing:0.150px;-webkit-text-stroke:0.3px #000;">To...</div>
<div class="a tx" style="left:41.0px;top:432px;font:bold 11px 'Liberation Sans',sans-serif;color:#000;letter-spacing:-0.100px;-webkit-text-stroke:0.3px #000;">Cc...</div>
<div class="a tx" style="left:38.0px;top:457px;font:bold 11px 'Liberation Sans',sans-serif;color:#000;letter-spacing:-0.120px;-webkit-text-stroke:0.3px #000;">Bcc...</div>
</body></html>
